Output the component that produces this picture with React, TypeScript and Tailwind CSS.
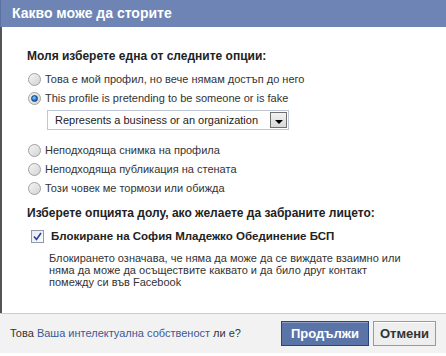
import { useState } from "react";

const font = { fontFamily: '"Liberation Sans", Arial, sans-serif' };

const Radio = ({ checked }: { checked?: boolean }) => (
    <span className="relative inline-flex h-[13px] w-[13px] shrink-0 items-center justify-center rounded-full border border-[#a0a0a0] bg-gradient-to-br from-[#f4f4f4] to-[#d4d4d4]">
        {checked && (
            <span className="h-[7px] w-[7px] rounded-full border border-[#1b3f6b] bg-[radial-gradient(circle_at_40%_35%,#8fd0ff,#1a6fd0_60%,#0e3f86)]"></span>
        )}
    </span>
);

const options = [
    "Това е мой профил, но вече нямам достъп до него",
    "This profile is pretending to be someone or is fake",
    "Неподходяща снимка на профила",
    "Неподходяща публикация на стената",
    "Този човек ме тормози или обижда",
];

const App = () => {
    const [selected] = useState(1);

    return (
        <div className="flex h-[356px] w-[446px] flex-col bg-white text-[11px] text-[#333]" style={font}>
            {/* Title bar */}
            <div className="flex h-[27px] shrink-0 items-center border-l border-[#5a71a3] bg-[#6d84b4] pl-[11px] text-[14px] font-bold text-white">
                Какво може да сторите
            </div>

            {/* Body */}
            <div className="flex h-[286px] flex-col border-l-2 border-[#555] pl-[25px] pt-[19px]">
                <div className="text-[12px] font-bold leading-[20px] text-[#222]">Моля изберете една от следните опции:</div>

                <div className="mt-[4px] flex flex-col">
                    {options.map((label, i) => (
                        <div key={label}>
                            <div className="flex h-[19px] items-center gap-[4px] pl-[1px]">
                                <Radio checked={i === selected} />
                                <span>{label}</span>
                            </div>
                            {i === 1 && (
                                <div className="mb-[11px] ml-[20px] mt-[2px] flex h-[20px] w-[242px] items-center justify-between border border-[#bdc7d8] pl-[7px] pr-[1px]">
                                    <span className="text-[#222]">Represents a business or an organization</span>
                                    <span className="flex h-[16px] w-[17px] items-center justify-center border border-[#6f6f6f] bg-gradient-to-b from-[#f2f2f2] to-[#d8d8d8]">
                                        <span className="mt-[3px] h-0 w-0 border-x-[4px] border-t-[4px] border-x-transparent border-t-black"></span>
                                    </span>
                                </div>
                            )}
                        </div>
                    ))}
                </div>

                <div className="mt-[5px] text-[12px] font-bold leading-[20px] text-[#222]">
                    Изберете опцията долу, ако желаете да забраните лицето:
                </div>

                <div className="mt-[3px] flex items-center gap-[7px] pl-[4px]">
                    <span className="flex h-[13px] w-[13px] items-center justify-center border border-[#8e9aab] bg-gradient-to-br from-[#e6e9ee] to-[#fbfbfb]">
                        <svg width="9" height="9" viewBox="0 0 9 9">
                            <path d="M1 4.5 L3.5 7.5 L8 1" fill="none" stroke="#2a3f9a" strokeWidth="1.6" />
                        </svg>
                    </span>
                    <span className="text-[11.5px] font-bold leading-[20px] text-[#222]">Блокиране на София Младежко Обединение БСП</span>
                </div>

                <p className="ml-[22px] mt-[6px] w-[356px] leading-[12px] text-[#333]">
                    Блокирането означава, че няма да може да се виждате взаимно или няма да може да осъществите каквато и да било друг контакт помежду си във Facebook
                </p>
            </div>

            {/* Footer */}
            <div className="flex h-[40px] items-center justify-between border-t border-[#ccc] bg-[#f2f2f2] pl-[10px] pr-[10px]">
                <div className="text-[11px] text-[#333]">
                    Това <span className="text-[#3b5998]">Ваша интелектуална собственост</span> ли е?
                </div>
                <div className="flex gap-[4px]">
                    <button className="h-[25px] w-[88px] border border-[#29447e] bg-[#5b74a8] text-[13px] font-bold text-white shadow-[inset_0_1px_0_#8a9cc2]">
                        Продължи
                    </button>
                    <button className="h-[25px] w-[63px] border border-[#999] bg-[#eee] text-[13px] font-bold text-[#333] shadow-[inset_0_1px_0_#fff]">
                        Отмени
                    </button>
                </div>
            </div>
        </div>
    );
};

export default App;
